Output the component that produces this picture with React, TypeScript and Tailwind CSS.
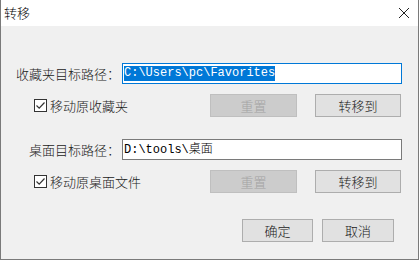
import type { ReactNode } from "react";

const ui = { fontFamily: '"Noto Sans CJK SC", "Noto Sans", sans-serif' };
const mono = { fontFamily: '"Liberation Mono", "Noto Sans CJK SC", monospace' };

function Btn({ children, disabled, className = "" }: { children: ReactNode; disabled?: boolean; className?: string }) {
  return (
    <div
      className={
        "flex h-[23px] items-center justify-center border text-[13px] " +
        (disabled ? "border-[#bfbfbf] bg-[#cccccc] text-[#a3a3a3] " : "border-[#adadad] bg-[#e1e1e1] text-[#1a1a1a] ") +
        className
      }
    >
      {children}
    </div>
  );
}

function Check({ label }: { label: string }) {
  return (
    <div className="flex items-center">
      <div className="ml-[33px] flex h-[13px] w-[13px] items-center justify-center border border-[#333333] bg-white">
        <svg width="11" height="11" viewBox="0 0 11 11">
          <path d="M1.5 5.5 L4.2 8.2 L9.5 2.5" fill="none" stroke="#333333" strokeWidth="1.2" />
        </svg>
      </div>
      <span className="ml-[3px] text-[13px] text-[#1a1a1a]">{label}</span>
    </div>
  );
}

export default function App() {
  return (
    <div className="flex h-[260px] w-[419px] flex-col border-x border-b border-[#7a7a7a] bg-[#f0f0f0] font-light" style={ui}>
      <div className="flex h-[26px] items-center justify-between bg-white pl-[3px] pr-[8px]">
        <span className="text-[13px] text-black">转移</span>
        <svg width="12" height="12" viewBox="0 0 12 12">
          <path d="M1 1 L11 11 M11 1 L1 11" stroke="#222" strokeWidth="1" />
        </svg>
      </div>

      <div className="mt-[37px] flex items-center">
        <div className="w-[119px] text-right text-[13px] text-[#1a1a1a]">收藏夹目标路径：</div>
        <div className="ml-[2px] mr-[16px] flex h-[21px] flex-1 items-center border border-[#0078d7] bg-white pl-[1px] text-[12px]" style={mono}>
          <span className="bg-[#0078d7] leading-[15px] text-white">C:\Users\pc\Favorites</span>
        </div>
      </div>

      <div className="mt-[10px] flex items-center justify-between pr-[17px]">
        <Check label="移动原收藏夹" />
        <div className="flex gap-[18px]">
          <Btn disabled className="w-[87px]">重置</Btn>
          <Btn className="w-[86px]">转移到</Btn>
        </div>
      </div>

      <div className="mt-[22px] flex items-center">
        <div className="w-[119px] text-right text-[13px] text-[#1a1a1a]">桌面目标路径：</div>
        <div className="ml-[2px] mr-[16px] flex h-[21px] flex-1 items-center border border-[#7a7a7a] bg-white pl-[1px] text-[12px] text-black" style={mono}>
          D:\tools\桌面
        </div>
      </div>

      <div className="mt-[10px] flex items-center justify-between pr-[17px]">
        <Check label="移动原桌面文件" />
        <div className="flex gap-[18px]">
          <Btn disabled className="w-[87px]">重置</Btn>
          <Btn className="w-[86px]">转移到</Btn>
        </div>
      </div>

      <div className="mt-[26px] flex justify-end gap-[9px] pr-[24px]">
        <Btn className="w-[71px]">确定</Btn>
        <Btn className="w-[72px]">取消</Btn>
      </div>
    </div>
  );
}
